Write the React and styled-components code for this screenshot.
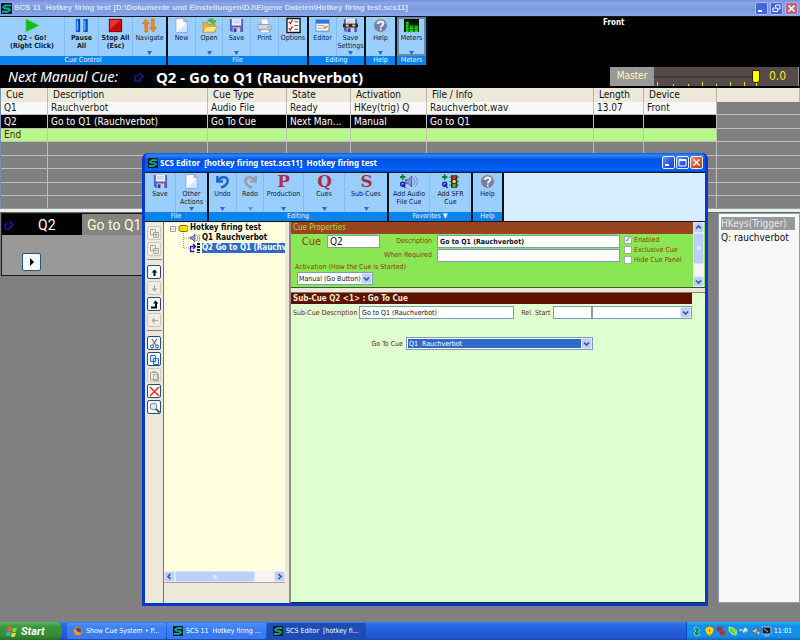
import React from 'react';
import styled, { createGlobalStyle, css } from 'styled-components';

const GlobalStyle = createGlobalStyle`
    * {
        box-sizing: border-box;
    }

    body {
        margin: 0;
        overflow: hidden;
        background: #808080;
    }

    body, button, input, select {
        font-family: "DejaVu Sans Condensed", "Noto Sans", sans-serif;
        font-size: 7px;
    }

    button, input, select {
        margin: 0;
        padding: 0;
        border: 0;
        border-radius: 0;
        color: inherit;
    }
`;

const Screen = styled.div`
    position: relative;
    display: flex;
    flex-direction: column;
    height: 100vh;
    min-height: 480px;
`;

/* ---------- title bars ---------- */

const TitleBar = styled.header`
    display: flex;
    align-items: center;
    flex: none;
    gap: 2px;
    height: ${(props) => (props.$active ? '19px' : '16px')};
    padding: 0 2px 0 ${(props) => (props.$active ? '3px' : '1px')};
    color: ${(props) => (props.$active ? '#fff' : '#d8e4f8')};
    background: ${(props) => (props.$active
        ? 'linear-gradient(#0a5be0, #2a86ff 12%, #0052e0 35%, #0058ee 70%, #0066ff 88%, #0040c8)'
        : 'linear-gradient(#7a8fdc, #8ba4e8 20%, #7b98e0 60%, #86a6ea)')};
    border-radius: ${(props) => (props.$active ? '5px 5px 0 0' : '0')};
`;

const TitleText = styled.h1`
    flex: 1;
    margin: 0;
    overflow: hidden;
    font-family: ${(props) => (props.$small ? '"Noto Sans"' : '"Liberation Sans"')}, sans-serif;
    font-size: 8px;
    font-weight: bold;
    line-height: 12px;
    white-space: pre;
`;

const WindowButtons = styled.div`
    display: flex;
    gap: ${(props) => (props.$active ? '1px' : '2px')};
`;

const WindowButton = styled.button`
    display: flex;
    width: 13px;
    height: 13px;
    border: 1px solid ${(props) => (props.$active ? '#e8f0ff' : '#a8b8f0')};
    border-radius: 2px;
    background: ${(props) => {
        if (props.$close) {
            return props.$active ? 'linear-gradient(135deg, #f0a080, #e05028 50%, #c83c18)' : '#b8667c';
        }
        return props.$active ? 'linear-gradient(135deg, #6a98f8, #2a5ce8 50%, #1c48c8)' : '#4068dc';
    }};

    svg {
        display: block;
    }
`;

const windowGlyphs = {
    minimize: <path d="M2 8h4" strokeWidth="2" />,
    maximize: <path d="M2 2.500h7v6.500h-7zM2 3.500h7" strokeWidth="1" />,
    restore: <path d="M4.500 4V2h4.500v4H7M2 5h4.500v3.500H2z" strokeWidth="1" />,
    close: <path d="M2.500 2.500l6 6M8.500 2.500l-6 6" strokeWidth="1.600" />,
};

function WindowControls({ active, middle }) {
    return (
        <WindowButtons $active={active}>
            {['minimize', middle, 'close'].map((name) => (
                <WindowButton key={name} aria-label={name} $active={active} $close={name === 'close'}>
                    <svg width="11" height="11" fill="none" stroke="#fff">{windowGlyphs[name]}</svg>
                </WindowButton>
            ))}
        </WindowButtons>
    );
}

function Logo({ size = 11 }) {
    return (
        <svg width={size} height={size} viewBox="0 0 12 12">
            <rect width="12" height="12" fill="#06201e" />
            <path d="M11 2.500H5L2.500 4.500 4 6h4l1.500 1.500L7 9.500H1" fill="none" stroke="#18a8a0" strokeWidth="2" />
        </svg>
    );
}

/* ---------- icons ---------- */

const Letter = styled.text`
    fill: #b02c44;
    font-family: "DejaVu Serif", serif;
    font-size: 18px;
    font-weight: bold;
    text-anchor: middle;
`;

function Disk({ bar }) {
    return (
        <g>
            <path d="M1 1h14v14H3l-2-2z" fill="#5a5cc0" />
            <path d="M3 1h10v7H3z" fill="#f0f2fc" />
            <path d="M4 3h8M4 5h8" stroke="#b8c0e0" />
            <path d="M4 10h8v5H4z" fill="#c8cce8" />
            <path d="M5 11h3v4H5z" fill="#3c3c90" />
            {bar && <path d="M0 6h16v4H0z" fill="#282828" />}
            {bar && <path d="M3 8h3M10 8h3" stroke="#f0e040" strokeWidth="2" />}
        </g>
    );
}

const icons = {
    go: <path d="M1 1L15 8L1 15z" fill="#12b81c" stroke="#50d850" />,
    pause: (
        <g>
            <path d="M2 1h4v14H2zM10 1h4v14h-4z" fill="#1060d8" />
            <path d="M3 3h1v10H3zM11 3h1v10h-1z" fill="#68e0f8" />
            <path d="M6 1v14M14 1v14" stroke="#0a2c88" />
        </g>
    ),
    stop: (
        <g>
            <path d="M1 1h14v14H1z" fill="#c80808" />
            <path d="M1 1h14L1 13z" fill="#e83030" />
            <path d="M1.500 1.500h13v13h-13z" fill="none" stroke="#800" />
        </g>
    ),
    navigate: (
        <g fill="#f08c14" stroke="#c86808" strokeWidth=".6">
            <path d="M4 1l4 5H6v9H3V6H0.500z" />
            <path d="M12 15l-4-5h2V1h3v9h2.500z" />
        </g>
    ),
    page: (
        <g>
            <path d="M2 0.500h8.500L14 4v11.500H2z" fill="#f8fbff" stroke="#90a8cc" />
            <path d="M10.500 0.500V4H14z" fill="#c0d4f0" stroke="#90a8cc" />
            <path d="M3 15l10-9v9z" fill="#d4e6f8" />
        </g>
    ),
    open: (
        <g>
            <path d="M1 5h5l1 2h7v8H1z" fill="#e8b830" stroke="#b88818" strokeWidth=".7" />
            <path d="M4 9h12l-3 6H1z" fill="#ffe880" stroke="#c89820" strokeWidth=".7" />
            <path d="M6 4c1-4 6-4 7-1h2l-3 4-4-4h2c-1-1-3 0-4 1z" fill="#60c028" stroke="#388818" strokeWidth=".5" />
        </g>
    ),
    save: <Disk />,
    saveSettings: <Disk bar />,
    print: (
        <g>
            <path d="M4 1h7l2 6H5z" fill="#fff" stroke="#98a0b0" strokeWidth=".7" />
            <path d="M1 7h13l2 5H1z" fill="#d4d8e0" stroke="#8088a0" strokeWidth=".7" />
            <path d="M1 12h15l-2 3H3z" fill="#a8acb8" />
            <path d="M5 13h7l1 2H4z" fill="#f8f8f8" />
            <path d="M11 9.500h3" stroke="#58b040" />
        </g>
    ),
    options: (
        <g>
            <path d="M1 .5h14v15H1z" fill="#fff" stroke="#181818" strokeWidth="1.500" />
            <path d="M9 4h4M9 8h4M9 12h4" stroke="#505050" />
            <path d="M3 4l1.500 2L7 2M3 11l1.500 2L7 9" fill="none" stroke="#d02020" strokeWidth="1.300" />
        </g>
    ),
    editor: (
        <g>
            <path d="M1 2h14v12H1z" fill="#f4f6fc" stroke="#6888b8" />
            <path d="M1 2h14v4H1z" fill="#2c78e0" />
            <path d="M3 11h5M3 8h7" stroke="#98a8c0" />
            <path d="M8 10l5-2 1 1-4 3z" fill="#e89020" />
        </g>
    ),
    help: (
        <g>
            <circle cx="8" cy="8" r="7.300" fill="#7080a8" stroke="#b8c0d0" />
            <path d="M2.500 6a6 5 0 0 1 11 0z" fill="#98a8c8" />
            <path d="M5.500 6.500c0-4 5.500-3.500 5.500-.5 0 2-2.700 2-2.700 4" fill="none" stroke="#fff" strokeWidth="1.700" />
            <circle cx="8.300" cy="12.200" r="1" fill="#fff" />
        </g>
    ),
    meters: (
        <g>
            <path d="M0 1h16v14H0z" fill="#081008" />
            <path d="M2 15V4h3v11M6 15V8h4v7M11 15V8h4v7" fill="#18e018" />
            <path d="M0 6.500h16M0 9.500h16M0 12.500h16" stroke="#084808" strokeWidth=".7" />
        </g>
    ),
    undo: (
        <g fill="none" stroke="#1c64c8" strokeWidth="2.600">
            <path d="M2.500 2v6h6" />
            <path d="M3 7.500C7 1 14 3 13.500 8c-.5 3-3 5-7 6.500" />
        </g>
    ),
    redo: (
        <g fill="none" stroke="#989ca8" strokeWidth="2.600">
            <path d="M13.500 2v6h-6" />
            <path d="M13 7.500C9 1 2 3 2.500 8c.5 3 3 5 7 6.500" />
        </g>
    ),
    production: <Letter x="8" y="14">P</Letter>,
    cues: <Letter x="8" y="14">Q</Letter>,
    subCues: <Letter x="8" y="14">S</Letter>,
    addAudio: (
        <g>
            <path d="M3 0v6M0 3h6" stroke="#108030" strokeWidth="2" />
            <circle cx="3" cy="11" r="2.200" fill="none" stroke="#1818a0" strokeWidth="1.600" />
            <path d="M3 11l3 4" stroke="#1818a0" strokeWidth="1.500" />
            <path d="M6 6h3l4-4v12l-4-4H6z" fill="#9090d8" stroke="#303078" strokeWidth=".7" />
            <path d="M15 4c2 2 2 6 0 8M17 2c3 4 3 8 0 12" fill="none" stroke="#7880a0" />
        </g>
    ),
    addSfr: (
        <g>
            <path d="M3 0v6M0 3h6" stroke="#108030" strokeWidth="2" />
            <circle cx="3" cy="11" r="2.200" fill="none" stroke="#1818a0" strokeWidth="1.600" />
            <path d="M3 11l3 4" stroke="#1818a0" strokeWidth="1.500" />
            <path d="M8 3h11M8 8h11M8 12h11" stroke="#585858" />
            <path d="M10 1h7v14h-7z" fill="#303030" />
            <circle cx="13.500" cy="3.500" r="2" fill="#f02818" />
            <circle cx="13.500" cy="8" r="2" fill="#f8d820" />
            <circle cx="13.500" cy="12.500" r="2" fill="#20d030" />
        </g>
    ),
};

function GoToArrow({ size = 10 }) {
    return (
        <svg width={size} height={size} viewBox="0 0 10 10" fill="none" stroke="#2020d0" strokeWidth="1.200">
            <path d="M1 4v5h5V7M1 4h4M5.500 1.500L9 4.500 5.500 7.500" />
        </svg>
    );
}

/* ---------- toolbars ---------- */

const Toolbar = styled.div`
    display: flex;
    flex: none;
    height: 49px;
    border-top: 1px solid #101820;
    background: ${(props) => props.$rest};
`;

const ToolGroup = styled.section`
    display: flex;
    flex-direction: column;
    border-right: 2px solid #05101c;
`;

const ToolButtons = styled.div`
    display: flex;
    flex: 1;
`;

const GroupLabel = styled.div`
    height: 9px;
    color: #e8f6ff;
    background: #0a84ec;
    line-height: 9px;
    text-align: center;
`;

const ToolButton = styled.button`
    display: grid;
    grid-template-rows: 16px 17px 4px;
    align-content: start;
    justify-items: center;
    width: ${(props) => props.$width}px;
    padding-top: 1px;
    border-right: 1px solid #84bcec;
    color: #10202c;
    background: #99ceff;
    font-weight: ${(props) => (props.$strong ? 'bold' : 'normal')};
    line-height: 8px;
    white-space: pre-line;

    &:last-child {
        border-right: 0;
    }

    svg {
        display: block;
        overflow: visible;
    }

    ${(props) => props.$pressed && css`
        outline: 2px solid #6888a8;
        outline-offset: -2px;
    `}
`;

const Drop = styled.svg`
    fill: ${(props) => (props.$dim ? '#7890a8' : '#2464f0')};
`;

const wideIcons = ['addAudio', 'addSfr'];

function Tool({ icon, label, width, strong, drop, dim, pressed }) {
    const wide = wideIcons.includes(icon);
    return (
        <ToolButton $width={width} $strong={strong} $pressed={pressed}>
            <svg width={wide ? 18 : 15} height="15" viewBox={wide ? '0 0 20 16' : '0 0 16 16'}>{icons[icon]}</svg>
            <span>{label}</span>
            {drop && <Drop $dim={dim} width="5" height="4"><path d="M0 0h5L2.500 4z" /></Drop>}
        </ToolButton>
    );
}

const mainTools = [
    {
        label: 'Cue Control',
        tools: [
            { icon: 'go', label: 'Q2 - Go!\n(Right Click)', width: 65, strong: true },
            { icon: 'pause', label: 'Pause\nAll', width: 34, strong: true },
            { icon: 'stop', label: 'Stop All\n(Esc)', width: 34, strong: true },
            { icon: 'navigate', label: 'Navigate', width: 33, drop: true },
        ],
    },
    {
        label: 'File',
        tools: [
            { icon: 'page', label: 'New', width: 28 },
            { icon: 'open', label: 'Open', width: 27, drop: true },
            { icon: 'save', label: 'Save', width: 28, drop: true },
            { icon: 'print', label: 'Print', width: 28 },
            { icon: 'options', label: 'Options', width: 28 },
        ],
    },
    {
        label: 'Editing',
        tools: [
            { icon: 'editor', label: 'Editor', width: 28 },
            { icon: 'saveSettings', label: 'Save\nSettings', width: 27, drop: true },
        ],
    },
    { label: 'Help', tools: [{ icon: 'help', label: 'Help', width: 29, drop: true }] },
    { label: 'Meters', tools: [{ icon: 'meters', label: 'Meters', width: 29, drop: true, pressed: true }] },
];

const editorTools = [
    {
        label: 'File',
        tools: [
            { icon: 'save', label: 'Save', width: 31 },
            { icon: 'page', label: 'Other\nActions', width: 31, drop: true },
        ],
    },
    {
        label: 'Editing',
        tools: [
            { icon: 'undo', label: 'Undo', width: 28, drop: true },
            { icon: 'redo', label: 'Redo', width: 27, drop: true, dim: true },
            { icon: 'production', label: 'Production', width: 40, drop: true },
            { icon: 'cues', label: 'Cues', width: 41, drop: true },
            { icon: 'subCues', label: 'Sub-Cues', width: 42, drop: true },
        ],
    },
    {
        label: 'Favorites ▼',
        tools: [
            { icon: 'addAudio', label: 'Add Audio\nFile Cue', width: 41 },
            { icon: 'addSfr', label: 'Add SFR\nCue', width: 41 },
        ],
    },
    { label: 'Help', tools: [{ icon: 'help', label: 'Help', width: 29 }] },
];

function Ribbon({ groups }) {
    return groups.map((group) => (
        <ToolGroup key={group.label}>
            <ToolButtons>
                {group.tools.map((tool) => <Tool key={tool.label} {...tool} />)}
            </ToolButtons>
            <GroupLabel>{group.label}</GroupLabel>
        </ToolGroup>
    ));
}

const OutputName = styled.div`
    flex: 1;
    padding: 1px 0 0 175px;
    color: #fff;
    font-size: 8px;
    font-weight: bold;
    line-height: 9px;
`;

/* ---------- next cue bar ---------- */

const NextCueBar = styled.div`
    display: flex;
    align-items: center;
    flex: none;
    height: 23px;
    padding: 0 1px 0 8px;
    color: #fff;
    background: #000;
    font-family: "Noto Sans", sans-serif;
    font-size: 15px;
    line-height: 18px;
    white-space: nowrap;
`;

const NextLabel = styled.em`
    width: 126px;
    font-size: 14px;
`;

const NextCue = styled.strong`
    flex: 1;
    padding-left: 12px;
`;

const MasterFader = styled.div`
    display: flex;
    width: 189px;
    height: 19px;
    border-right: 1px solid #999;
    background: #574a4a;
    color: #f4f010;
    font-family: "DejaVu Sans Condensed", sans-serif;
`;

const MasterLabel = styled.label`
    width: 44px;
    color: #ffffb8;
    background: #999;
    font-size: 10px;
    line-height: 18px;
    text-align: center;
`;

const FaderTrack = styled.div`
    display: grid;
    flex: 1;

    > * {
        grid-area: 1 / 1;
    }
`;

const FaderTicks = styled.svg`
    align-self: end;
    width: 100%;
    height: 4px;
`;

const Fader = styled.input`
    width: 100%;
    height: 18px;
    appearance: none;
    background: linear-gradient(#403838, #403838) 0 9px / 100% 2px no-repeat;

    &::-webkit-slider-thumb {
        appearance: none;
        width: 8px;
        height: 13px;
        border: 1px solid #282010;
        border-radius: 0 0 3px 3px;
        background: #ffff00;
    }
`;

const FaderValue = styled.output`
    width: 38px;
    padding-left: 9px;
    font-size: 12px;
    line-height: 18px;
`;

/* ---------- cue list ---------- */

const CueList = styled.div`
    flex: none;
    height: 120px;
    overflow: hidden;
    border-left: 1px solid #7890b0;
    background: #808080;
`;

const CueTable = styled.table`
    width: 100%;
    border-spacing: 0;
    table-layout: fixed;
    font-size: 10px;
    line-height: 12px;
    white-space: nowrap;
`;

const HeadCell = styled.th`
    height: 14px;
    padding: 0 0 0 5px;
    border-right: 1px solid #b8b4a4;
    background: #ece9d8;
    color: #101010;
    font-weight: normal;
    text-align: left;
`;

const CueRow = styled.tr`
    height: 13px;
    color: ${(props) => props.$color};
    background: ${(props) => props.$fill};

    &:nth-child(even) {
        height: 14px;
    }

    td {
        overflow: hidden;
        padding: 0 2px 0 3px;
        border: solid #c0c0b8;
        border-width: 0 1px 1px 0;
    }

    td:last-child {
        background: #808080;
        border-right: 0;
    }
`;

const columns = [
    ['Cue', 47],
    ['Description', 160],
    ['Cue Type', 79],
    ['State', 64],
    ['Activation', 76],
    ['File / Info', 167],
    ['Length', 50],
    ['Device', 73],
];

const cues = [
    { color: '#181818', fill: '#f8f8f8', cells: ['Q1', 'Rauchverbot', 'Audio File', 'Ready', 'HKey(trig) Q', 'Rauchverbot.wav', '13.07', 'Front'] },
    { color: '#fff', fill: '#000', cells: ['Q2', 'Go to Q1 (Rauchverbot)', 'Go To Cue', 'Next Man...', 'Manual', 'Go to Q1', '', ''] },
    { color: '#501808', fill: '#b8f888', cells: ['End', '', '', '', '', '', '', ''] },
    ...Array.from({ length: 5 }, () => ({ color: '#000', fill: '#808080', cells: Array(8).fill('') })),
];

const Splitter = styled.div`
    flex: none;
    height: 5px;
    border-top: 1px solid #88a0b8;
    border-bottom: 1px solid #686860;
    background: #f0eee0;
`;

/* ---------- lower half ---------- */

const Workspace = styled.div`
    display: flex;
    flex: 1;
    align-items: flex-start;
    gap: 16px;
    padding: 0 0 0 1px;
`;

const CuePanel = styled.article`
    flex: 1;
    height: 63px;
    border: 1px solid #181818;
    background: #999;
    font-family: Roboto, sans-serif;
    font-size: 14px;
`;

const CuePanelHead = styled.div`
    display: flex;
    align-items: center;
    height: 21px;
    color: #ffffc0;
    background: #848484;
`;

const CuePanelName = styled.div`
    display: flex;
    align-items: center;
    gap: 24px;
    width: 80px;
    height: 21px;
    margin-right: 5px;
    padding-left: 2px;
    color: #fff;
    background: #000;
`;

const PlayButton = styled.button`
    display: flex;
    align-items: center;
    justify-content: center;
    width: 19px;
    height: 18px;
    margin: 18px 0 0 20px;
    border: 1px solid #205888;
    border-radius: 2px;
    background: #f8f8f4;
`;

const HotkeyPanel = styled.aside`
    align-self: stretch;
    width: 82px;
    margin-bottom: 19px;
    padding: 3px 2px;
    border: 1px solid #88a0b8;
    background: #f8f8f8;
    color: #101010;
    font-size: 10px;
    line-height: 15px;
    white-space: nowrap;
`;

const HotkeyHeading = styled.div`
    width: 74px;
    color: #e8e8e8;
    background: #999;
    line-height: 13px;
`;

/* ---------- editor window ---------- */

const EditorWindow = styled.section`
    position: absolute;
    inset: 153px 92px 34px 142px;
    display: flex;
    flex-direction: column;
    border: solid #0838d0;
    border-width: 0 3px 3px;
    border-radius: 6px 6px 0 0;
    background: #0838d0;
`;

const EditorBody = styled.div`
    display: grid;
    grid-template-columns: 19px 121px minmax(0, 1fr);
    grid-template-rows: minmax(0, 1fr);
    flex: 1;
    min-height: 0;
    border-top: 1px solid #101820;
    background: #ece9d8;
`;

const SideTools = styled.div`
    display: flex;
    flex-direction: column;
    align-items: center;
    gap: 2px;
    padding-top: 4px;
    border-right: 1px solid #607890;
`;

const SideButton = styled.button`
    display: flex;
    align-items: center;
    justify-content: center;
    flex: none;
    width: 14px;
    height: 14px;
    border: 1px solid ${(props) => (props.disabled ? '#ccc9b8' : '#205080')};
    border-radius: 2px;
    background: ${(props) => (props.disabled ? '#f0eee2' : '#f8f8f4')};
    color: ${(props) => (props.disabled ? '#a8a89c' : '#080808')};
`;

const SideRule = styled.hr`
    width: 15px;
    margin: 1px 0 3px;
    border: 0;
    border-top: 1px solid #888478;
`;

const sideGlyphs = {
    expand: <path d="M1.500 1.500h5v5h-5zM4.500 4.500h5v5h-5zM7 5.500v3M5.500 7h3" />,
    collapse: <path d="M1.500 1.500h5v5h-5zM4.500 4.500h5v5h-5zM5.500 7h3" />,
    up: <path d="M2.500 5.500L5.500 2.500 8.500 5.500H6.500V9h-2V5.500z" fill="currentColor" stroke="none" />,
    down: <path d="M2.500 5.500L5.500 8.500 8.500 5.500H6V2H5v3.500z" fill="currentColor" stroke="none" />,
    out: <path d="M2 7.500h4V4.500H4L6.500 1.500 9.500 4.500H8V9.500H2z" fill="currentColor" stroke="none" />,
    in: <path d="M2.500 5.500L5.500 2.500V5H9v1H5.500v2.500z" fill="currentColor" stroke="none" />,
    cut: (
        <g>
            <path d="M3 1l4 6M8 1L4 7" stroke="#6c7890" strokeWidth="1.300" />
            <circle cx="3" cy="8.500" r="1.500" stroke="#1c50b0" />
            <circle cx="8" cy="8.500" r="1.500" stroke="#1c50b0" />
        </g>
    ),
    copy: <path d="M1.500 1.500h5v6h-5zM4.500 4.500h5v6h-5z" fill="#d8e8ff" stroke="#3868c0" />,
    paste: <path d="M1.500 2.500h7v7h-7zM3.500 1.500h3M4.500 4.500h5v6h-5z" fill="#eeece0" />,
    remove: <path d="M1 1l9 9M10 1l-9 9" stroke="#f03018" strokeWidth="1.500" />,
    find: (
        <g>
            <circle cx="4.500" cy="4.500" r="3.300" fill="#dceeff" stroke="#788898" />
            <path d="M7 7l3.500 3.500" stroke="#303840" strokeWidth="1.600" />
        </g>
    ),
};

const sideTools = [
    ['expand', 'collapse'],
    ['up', 'down', 'out', 'in'],
    ['cut', 'copy', 'paste', 'remove', 'find'],
];

const disabledTools = ['expand', 'collapse', 'down', 'in', 'paste'];

const TreePane = styled.div`
    display: flex;
    flex-direction: column;
    min-width: 0;
    padding-top: 1px;
`;

const Tree = styled.ul`
    flex: 1;
    margin: 0;
    padding: 0 0 0 6px;
    overflow: hidden;
    list-style: none;
    background: #ffffe0;
    color: #080808;
    font-size: 8px;
    font-weight: bold;
    line-height: 10px;
    white-space: nowrap;
`;

const TreeItem = styled.li`
    display: flex;
    align-items: center;
    gap: 2px;
    height: 10px;
    padding-left: ${(props) => (props.$level ? '12px' : '0')};
`;

const TreeText = styled.span`
    flex: 1;
    overflow: hidden;
    color: ${(props) => (props.$selected ? '#fff' : 'inherit')};
    background: ${(props) => (props.$selected ? '#316ac5' : 'none')};
`;

const TreeFoot = styled.div`
    height: 21px;
    border-top: 1px solid #a8a598;
`;

const ScrollBar = styled.div`
    display: flex;
    flex: none;
    flex-direction: ${(props) => (props.$vertical ? 'column' : 'row')};
    width: ${(props) => (props.$vertical ? '11px' : 'auto')};
    height: ${(props) => (props.$vertical ? 'auto' : '11px')};
    background: #f6f5f0;
`;

const ArrowBox = styled.span`
    display: flex;
    align-items: center;
    justify-content: center;
    flex: none;
    width: 11px;
    height: 11px;
    border: 1px solid #e0e8fc;
    border-radius: 2px;
    background: #bdcffa;
    pointer-events: none;
`;

const ScrollThumb = styled.span`
    display: flex;
    align-items: center;
    justify-content: center;
    flex: ${(props) => props.$share};
    border: 1px solid #d8e4ff;
    border-radius: 2px;
    background: #bccffb;

    &::after {
        content: '';
        width: 4px;
        height: 4px;
        background: #dce6ff;
    }
`;

const ScrollGap = styled.span`
    flex: ${(props) => props.$share};
`;

const chevrons = {
    up: 'M1 4.500L3.500 2 6 4.500',
    down: 'M1 2.500L3.500 5 6 2.500',
    left: 'M4.500 1L2 3.500 4.500 6',
    right: 'M2.500 1L5 3.500 2.500 6',
};

function Chevron({ to }) {
    return (
        <ArrowBox>
            <svg width="7" height="7" fill="none" stroke="#405880" strokeWidth="1.600"><path d={chevrons[to]} /></svg>
        </ArrowBox>
    );
}

const Panes = styled.main`
    display: flex;
    flex-direction: column;
    margin-left: 4px;
    border-left: 2px solid #908c80;
`;

const CuePane = styled.section`
    display: flex;
    flex: none;
    height: 66px;
    padding-right: 1px;
    border-bottom: 1px solid #385828;
    background: #8ae652;
    color: #8c3c10;
`;

const CueForm = styled.form`
    flex: 1;
    min-width: 0;
`;

const PaneHeading = styled.h2`
    height: ${(props) => (props.$sub ? '11px' : '12px')};
    margin: 0;
    padding-left: 2px;
    color: ${(props) => (props.$sub ? '#f4e8c8' : '#b8d848')};
    background: ${(props) => (props.$sub ? '#5c1000' : '#984420')};
    font-size: 8px;
    font-weight: ${(props) => (props.$sub ? 'bold' : 'normal')};
    line-height: 11px;
`;

const CueFields = styled.div`
    display: grid;
    grid-template-columns: 36px 53px 57px minmax(0, 1fr) 73px;
    grid-template-rows: 13px 14px;
    row-gap: 1px;
    padding-top: 1px;
    line-height: 13px;
`;

const FieldLabel = styled.label`
    padding-right: ${(props) => (props.$big ? '6px' : '5px')};
    color: ${(props) => (props.$dark ? '#701808' : 'inherit')};
    font-size: ${(props) => (props.$big ? '11px' : '7px')};
    text-align: right;
    white-space: nowrap;
`;

const TextBox = styled.input`
    width: 100%;
    min-width: 0;
    height: 13px;
    padding: 0 2px;
    border: 1px solid #7f9db9;
    background: #fff;
    color: #101010;
    font-size: ${(props) => (props.$big ? '10px' : '7px')};
    font-weight: ${(props) => (props.$strong ? 'bold' : 'normal')};
`;

const WhenLabel = styled(FieldLabel)`
    grid-column: 3;
`;

const Checks = styled.div`
    grid-row: 1 / 3;
    grid-column: 5;
    padding-left: 4px;
`;

const Check = styled.label`
    display: flex;
    align-items: center;
    gap: 2px;
    height: 10px;
    line-height: 10px;
    white-space: nowrap;
`;

const CheckBox = styled.input`
    display: grid;
    width: 8px;
    height: 8px;
    appearance: none;
    border: 1px solid #a0b0a8;
    background: #fff;

    &:checked::after {
        content: '✓';
        color: #1c3870;
        font-size: 8px;
        font-weight: bold;
        line-height: 6px;
    }
`;

const Activation = styled.div`
    display: flex;
    flex-direction: column;
    padding-left: 4px;
    line-height: 9px;
`;

const DropDown = styled.span`
    display: flex;
    flex: none;
    align-items: center;
    width: ${(props) => props.$width}px;
    height: 13px;
    margin-left: ${(props) => props.$indent || 0}px;
    border: 1px solid #7f9db9;
    background: #fff;

    select {
        flex: 1;
        min-width: 0;
        height: ${(props) => (props.$focused ? '9px' : '11px')};
        margin-left: ${(props) => (props.$focused ? '1px' : '0')};
        padding-left: 1px;
        appearance: none;
        outline: 0;
        color: ${(props) => (props.$focused ? '#fff' : '#101010')};
        background: ${(props) => (props.$focused ? '#316ac5' : '#fff')};
    }
`;

const PaneSplitter = styled.div`
    flex: none;
    height: 5px;
    background: #ece9d8;
    border-bottom: 1px solid #807c70;
`;

const SubPane = styled.section`
    flex: 1;
    padding-right: 13px;
    border-bottom: 1px solid #202818;
    background: #e0ffd0;
    color: #101010;
`;

const SubRow = styled.div`
    display: flex;
    align-items: center;
    height: 13px;
    margin-top: ${(props) => props.$space}px;
    padding-left: 2px;
`;

const SubLabel = styled(FieldLabel)`
    width: ${(props) => props.$width}px;
    padding-right: 3px;
    flex: none;
`;

const Sized = styled.span`
    display: flex;
    flex: ${(props) => props.$flex};
`;

/* ---------- task bar ---------- */

const TaskBar = styled.footer`
    display: flex;
    flex: none;
    height: 18px;
    color: #fff;
    background: linear-gradient(#3c80f0, #2c6ae8 15%, #245edc 50%, #2058d8 85%, #1a48b0);
`;

const StartButton = styled.button`
    display: flex;
    align-items: center;
    gap: 3px;
    width: 62px;
    margin-right: 5px;
    padding-left: 6px;
    border-radius: 0 6px 6px 0;
    background: linear-gradient(#5cb85c, #3c983c 25%, #348c34 75%, #287028);
    font-family: Roboto, sans-serif;
    font-size: 11px;
    font-style: italic;
    font-weight: bold;
`;

const TaskButton = styled.button`
    display: flex;
    align-items: center;
    gap: 3px;
    width: 99px;
    height: 16px;
    margin: 1px 1px 0 0;
    padding-left: 6px;
    border-radius: 2px;
    background: ${(props) => (props.$active ? '#1c4cb4' : 'linear-gradient(#5090fc, #3c80f4 30%, #3878f0)')};
    line-height: 14px;
    white-space: pre;
`;

const Tray = styled.div`
    display: flex;
    align-items: center;
    gap: 2px;
    width: 114px;
    margin-left: auto;
    padding: 0 8px 0 6px;
    border-left: 1px solid #0c4cb0;
    background: linear-gradient(#28b0f8, #1490ec 20%, #1290e8 80%, #0c68c0);

    time {
        margin-left: auto;
    }
`;

const trayIcons = [
    <path d="M1 2l3-1 3 3-2 2 2 3-4 1-2-3 2-2z" fill="#1c8058" stroke="#d0e8e0" strokeWidth=".6" />,
    <path d="M4.500 0L9 2c0 4-1 6-4.500 8C1 8 0 6 0 2zM4.500 3v3M4.500 7v1" fill="#f8d820" stroke="#806010" strokeWidth=".8" />,
    <path d="M1 1h5v4H1zM4 5h5v4H4zM5 5l4 5M9 5l-4 5" fill="#404890" stroke="#e03020" strokeWidth="1" />,
    <path d="M1 1l4 1 4 3-1 4-4-1-3-3zM5 4l3 3" fill="#60d828" stroke="#d8f8a8" strokeWidth=".8" />,
    <path d="M0 6c0-4 3-4 4-1 1-5 3-4 5-1L8 7C7 4 6 5 5 8 3 4 2 4 0 6z" fill="#d8ecf8" stroke="#587898" strokeWidth=".5" />,
    <path d="M1 4h2l3-3v8L3 6H1zM7 5a2 2 0 1 1 0 4 2 2 0 0 1 0-4" fill="#c8ccd4" stroke="#505860" strokeWidth=".7" />,
    <path d="M0 1h9v7H0zM2 10h5M2 3l4 3" fill="#182030" stroke="#a8c0e8" strokeWidth="1" />,
];

function CueProperties() {
    return (
        <CuePane>
            <CueForm>
                <PaneHeading>Cue Properties</PaneHeading>
                <CueFields>
                    <FieldLabel $big htmlFor="cue">Cue</FieldLabel>
                    <TextBox $big id="cue" defaultValue="Q2" />
                    <FieldLabel htmlFor="description">Description</FieldLabel>
                    <TextBox $strong id="description" defaultValue="Go to Q1 (Rauchverbot)" />
                    <WhenLabel htmlFor="when">When Required</WhenLabel>
                    <TextBox id="when" />
                    <Checks>
                        <Check><CheckBox type="checkbox" defaultChecked />Enabled</Check>
                        <Check><CheckBox type="checkbox" />Exclusive Cue</Check>
                        <Check><CheckBox type="checkbox" />Hide Cue Panel</Check>
                    </Checks>
                </CueFields>
                <Activation>
                    <label htmlFor="activation">Activation (How the Cue is Started)</label>
                    <DropDown $width={76} $indent={2}>
                        <select id="activation"><option>Manual (Go Button)</option></select>
                        <Chevron to="down" />
                    </DropDown>
                </Activation>
            </CueForm>
            <ScrollBar $vertical>
                <Chevron to="up" />
                <ScrollThumb $share={7} />
                <ScrollGap $share={3} />
                <Chevron to="down" />
            </ScrollBar>
        </CuePane>
    );
}

function SubCueProperties() {
    return (
        <SubPane>
            <PaneHeading $sub>Sub-Cue Q2 &lt;1&gt; : Go To Cue</PaneHeading>
            <SubRow $space={2}>
                <SubLabel $dark $width={66} htmlFor="sub">Sub-Cue Description</SubLabel>
                <Sized $flex="157"><TextBox id="sub" defaultValue="Go to Q1 (Rauchverbot)" /></Sized>
                <SubLabel $dark $width={39} htmlFor="start">Rel. Start</SubLabel>
                <Sized $flex="39"><TextBox id="start" /></Sized>
                <DropDown $width={100}>
                    <select aria-label="Relative to"><option> </option></select>
                    <Chevron to="down" />
                </DropDown>
            </SubRow>
            <SubRow $space={18}>
                <SubLabel $dark $width={113} htmlFor="goto">Go To Cue</SubLabel>
                <DropDown $focused $width={187}>
                    <select id="goto"><option>{'Q1\u00a0 Rauchverbot'}</option></select>
                    <Chevron to="down" />
                </DropDown>
            </SubRow>
        </SubPane>
    );
}

function Editor() {
    return (
        <EditorWindow>
            <TitleBar $active as="div">
                <Logo size={10} />
                <TitleText as="h2" $small>{'SCS Editor  [hotkey firing test.scs11]  Hotkey firing test'}</TitleText>
                <WindowControls active middle="maximize" />
            </TitleBar>
            <Toolbar $rest="#d8edff"><Ribbon groups={editorTools} /></Toolbar>
            <EditorBody>
                <SideTools>
                    {sideTools.map((group, index) => (
                        <React.Fragment key={group[0]}>
                            {index > 0 && <SideRule />}
                            {group.map((name) => (
                                <SideButton key={name} aria-label={name} disabled={disabledTools.includes(name)}>
                                    <svg width="11" height="11" fill="none" stroke="currentColor">{sideGlyphs[name]}</svg>
                                </SideButton>
                            ))}
                        </React.Fragment>
                    ))}
                </SideTools>
                <TreePane>
                    <Tree>
                        <TreeItem>
                            <svg width="18" height="9">
                                <path d="M.5 2.500h5v5h-5zM2 5h2" fill="#fff" stroke="#90a0b8" />
                                <rect x="9" y="1.500" width="9" height="6" rx="2" fill="#f8e010" stroke="#807010" />
                            </svg>
                            <TreeText>Hotkey firing test</TreeText>
                        </TreeItem>
                        <TreeItem $level={1}>
                            <svg width="18" height="10">
                                <path d="M1.500 0v10M2 5h5" stroke="#a0a090" strokeDasharray="1 1" />
                                <path d="M8 4h2l3-3v8l-3-3H8z" fill="#9898d0" stroke="#484878" strokeWidth=".7" />
                                <path d="M14.500 2c1.500 2 1.500 4 0 6M16.500 1c1.500 3 1.500 5 0 8" fill="none" stroke="#888" strokeWidth=".8" />
                            </svg>
                            <TreeText>Q1 Rauchverbot</TreeText>
                        </TreeItem>
                        <TreeItem $level={1}>
                            <svg width="18" height="10">
                                <path d="M1.500 0v5M2 5h5" stroke="#a0a090" strokeDasharray="1 1" />
                                <path d="M9 3.500h4M8.500 3v5.500h4M11 1l2.500 2.500L11 6" fill="none" stroke="#1818b8" strokeWidth="1.300" />
                                <path d="M16.500 0v10" stroke="#202020" strokeWidth="3" strokeDasharray="2 1" />
                            </svg>
                            <TreeText $selected>Q2 Go to Q1 (Rauchverbot)</TreeText>
                        </TreeItem>
                    </Tree>
                    <ScrollBar>
                        <Chevron to="left" />
                        <ScrollThumb $share={8} />
                        <ScrollGap $share={2} />
                        <Chevron to="right" />
                    </ScrollBar>
                    <TreeFoot />
                </TreePane>
                <Panes>
                    <CueProperties />
                    <PaneSplitter />
                    <SubCueProperties />
                </Panes>
            </EditorBody>
        </EditorWindow>
    );
}

function App() {
    return (
        <Screen>
            <GlobalStyle />
            <TitleBar>
                <Logo />
                <TitleText>{'SCS 11  Hotkey firing test [D:\\Dokumente und Einstellungen\\DJ\\Eigene Dateien\\Hotkey firing test.scs11]'}</TitleText>
                <WindowControls middle="restore" />
            </TitleBar>
            <Toolbar $rest="#000">
                <Ribbon groups={mainTools} />
                <OutputName>Front</OutputName>
            </Toolbar>
            <NextCueBar>
                <NextLabel>Next Manual Cue:</NextLabel>
                <GoToArrow />
                <NextCue>Q2 - Go to Q1 (Rauchverbot)</NextCue>
                <MasterFader>
                    <MasterLabel htmlFor="master">Master</MasterLabel>
                    <FaderTrack>
                        <FaderTicks>
                            <path d="M3.500 0v4M19.500 2v2M34.500 2v2M48.500 0v4M62.500 2v2M76.500 0v4M90.500 0v4M102.500 0v4" stroke="#e8e020" />
                        </FaderTicks>
                        <Fader id="master" type="range" defaultValue="100" />
                    </FaderTrack>
                    <FaderValue>0.0</FaderValue>
                </MasterFader>
            </NextCueBar>
            <CueList>
                <CueTable>
                    <colgroup>
                        {columns.map(([name, width]) => <col key={name} width={width} />)}
                        <col />
                    </colgroup>
                    <thead>
                        <tr>
                            {columns.map(([name]) => <HeadCell key={name}>{name}</HeadCell>)}
                            <HeadCell />
                        </tr>
                    </thead>
                    <tbody>
                        {cues.map((cue, row) => (
                            <CueRow key={row} $color={cue.color} $fill={cue.fill}>
                                {cue.cells.map((cell, index) => <td key={index}>{cell}</td>)}
                                <td />
                            </CueRow>
                        ))}
                    </tbody>
                </CueTable>
            </CueList>
            <Splitter />
            <Workspace>
                <CuePanel>
                    <CuePanelHead>
                        <CuePanelName><GoToArrow />Q2</CuePanelName>
                        Go to Q1 (Rauchverbot)
                    </CuePanelHead>
                    <PlayButton aria-label="Play">
                        <svg width="6" height="8"><path d="M1 0l4 4-4 4z" /></svg>
                    </PlayButton>
                </CuePanel>
                <HotkeyPanel>
                    <HotkeyHeading>HKeys(Trigger)</HotkeyHeading>
                    Q: rauchverbot
                </HotkeyPanel>
            </Workspace>
            <TaskBar>
                <StartButton>
                    <svg width="12" height="12">
                        <path d="M2 2q2-1.500 4 0L5 6Q3 5 1 6z" fill="#f06028" />
                        <path d="M7 2.500q2 1.200 4 0L10 6.500q-2 1-4 0z" fill="#80d040" />
                        <path d="M1 7q2-1 4 0l-1 4q-2-1-4 0z" fill="#50a0f8" />
                        <path d="M6 7.500q2 1 4 0l-1 4q-2 1-4 0z" fill="#f8d030" />
                    </svg>
                    Start
                </StartButton>
                <TaskButton>
                    <svg width="10" height="10">
                        <circle cx="5" cy="5" r="4.500" fill="#f07818" />
                        <circle cx="5.500" cy="4.500" r="2.700" fill="#3050a8" />
                        <path d="M1 3c1 1 3 1 4 3l3 1c-2 3-7 2-7-4z" fill="#f8a020" />
                    </svg>
                    Show Cue System • P...
                </TaskButton>
                <TaskButton><Logo size={10} />{'SCS 11  Hotkey firing ...'}</TaskButton>
                <TaskButton $active><Logo size={10} />{'SCS Editor  [hotkey fi...'}</TaskButton>
                <Tray>
                    {trayIcons.map((icon, index) => <svg key={index} width="10" height="11">{icon}</svg>)}
                    <time>11:01</time>
                </Tray>
            </TaskBar>
            <Editor />
        </Screen>
    );
}

export default App;
